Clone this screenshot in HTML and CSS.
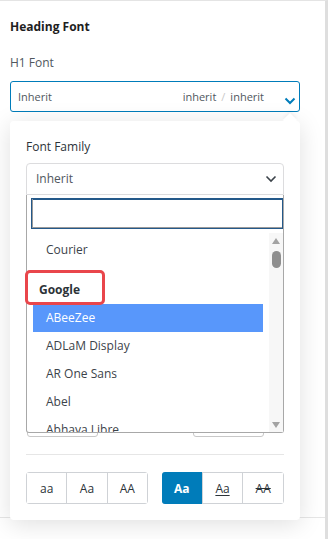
FILE: index.html
```html
<!DOCTYPE html>
<html lang="en">
<head>
<meta charset="utf-8">
<title>Heading Font</title>
<link rel="stylesheet" href="styles.css">
</head>
<body>
<div class="page">
  <section class="section">
    <h3 class="title">Heading Font</h3>
    <div class="label">H1 Font</div>
    <div class="select-main">
      <span class="sm-value">Inherit</span>
      <span class="sm-meta"><span>inherit</span><span class="slash">/</span><span>inherit</span></span>
      <svg class="chev-blue" width="12" height="8" viewBox="0 0 12 8"><polyline points="1.5,1.5 6,6 10.5,1.5" fill="none" stroke="#007cba" stroke-width="2"/></svg>
    </div>

    <div class="popover">
      <div class="pop-arrow"></div>
      <div class="pf-label">Font Family</div>
      <div class="pf-select">
        <span>Inherit</span>
        <svg class="chev-dark" width="12" height="8" viewBox="0 0 12 8"><polyline points="1.5,1.5 6,6 10.5,1.5" fill="none" stroke="#3c434a" stroke-width="1.6"/></svg>
      </div>
      <div class="fields">
        <div class="fbox"></div>
        <div class="fbox fbox-2"></div>
      </div>
      <div class="sep"></div>
      <div class="btn-row">
        <div class="btn-group">
          <button class="btn">aa</button>
          <button class="btn">Aa</button>
          <button class="btn">AA</button>
        </div>
        <div class="btn-group">
          <button class="btn active">Aa</button>
          <button class="btn under">Aa</button>
          <button class="btn strike">AA</button>
        </div>
      </div>

      <div class="dropdown">
        <div class="dd-search"><input class="dd-input" type="text"></div>
        <div class="dd-results">
          <ul class="dd-list">
            <li class="opt">Courier</li>
            <li class="group">Google</li>
            <li class="opt hl">ABeeZee</li>
            <li class="opt">ADLaM Display</li>
            <li class="opt">AR One Sans</li>
            <li class="opt">Abel</li>
            <li class="opt">Abhaya Libre</li>
          </ul>
          <div class="dd-track">
            <span class="arr-up"></span>
            <span class="thumb"></span>
            <span class="arr-down"></span>
          </div>
        </div>
      </div>
      <div class="annot"></div>
    </div>
  </section>
</div>
</body>
</html>
```

FILE: styles.css
```css
* { box-sizing: border-box; }

body {
  margin: 0;
  background: #fff;
  font-family: "Open Sans", "Noto Sans", sans-serif;
  font-size: 12px;
  color: #333;
}

.page {
  width: 328px;
  height: 539px;
  border-top: 1px solid #e4e4e4;
  border-right: 3px solid #dedede;
  overflow: hidden;
}

.section {
  position: relative;
  height: 517px;
  border-bottom: 1px solid #e6e6e6;
  padding: 18px 10px 0 10px;
}

.title {
  margin: 0;
  font-size: 12px;
  font-weight: 700;
  line-height: 16px;
  color: #1e1e1e;
}

.label {
  margin-top: 20px;
  line-height: 16px;
  color: #50575e;
}

.select-main {
  margin-top: 10px;
  height: 31px;
  width: 290px;
  border: 1px solid #007cba;
  border-radius: 3px;
  display: flex;
  align-items: center;
  padding: 0 3px 0 7px;
  font-size: 11px;
  color: #50575e;
  line-height: 16px;
}

.sm-value { flex: 1; }

.sm-meta {
  display: flex;
  gap: 5px;
}

.slash { color: #c9c9c9; }

.chev-blue {
  margin-left: 20px;
  margin-top: 8px;
}

.popover {
  position: absolute;
  top: 120px;
  left: 10px;
  width: 290px;
  height: 399px;
  background: #fff;
  border-radius: 4px;
  box-shadow: 0 4px 24px rgba(0, 0, 0, 0.13);
  padding: 16px;
}

.pop-arrow {
  position: absolute;
  top: -6px;
  left: 275px;
  width: 10px;
  height: 10px;
  background: #fff;
  transform: rotate(45deg);
  box-shadow: -2px -2px 3px rgba(0, 0, 0, 0.04);
}

.pf-label {
  position: relative;
  line-height: 20px;
  color: #2c3338;
}

.pf-select {
  margin-top: 6px;
  height: 32px;
  border: 1px solid #dcdcde;
  border-radius: 4px 4px 0 0;
  display: flex;
  align-items: center;
  justify-content: space-between;
  padding: 0 6px 0 9px;
  line-height: 16px;
  color: #50575e;
}

.fields {
  margin-top: 212px;
  display: flex;
  height: 30px;
}

.fbox {
  width: 71px;
  margin-left: 1px;
  border: 1px solid #c8c8c8;
  border-radius: 3px;
}

.fbox-2 {
  margin-left: auto;
  margin-right: 20px;
}

.sep {
  margin-top: 17px;
  height: 1px;
  background: #e6e6e6;
}

.btn-row {
  margin-top: 17px;
  display: flex;
  justify-content: space-between;
}

.btn-group {
  display: flex;
  width: 122px;
  height: 32px;
  border: 1px solid #cfd2d6;
  border-radius: 3px;
}

.btn {
  flex: 1;
  border: 0;
  border-left: 1px solid #cfd2d6;
  background: #fff;
  font-family: "Open Sans", "Noto Sans", sans-serif;
  font-size: 12px;
  color: #2c3338;
  padding: 0;
}

.btn:first-child { border-left: 0; }

.btn.active {
  margin: -1px 0 -1px -1px;
  border-radius: 3px 0 0 3px;
  background: #007cba;
  color: #fff;
  font-weight: 700;
}

.btn.under {
  text-decoration: underline;
  text-underline-offset: 2px;
}

.btn.strike { text-decoration: line-through; }

.dropdown {
  position: absolute;
  top: 74px;
  left: 16px;
  width: 258px;
  height: 238px;
  background: #fff;
  border: 1px solid #a8a8a8;
  border-top: 0;
  border-radius: 0 0 3px 3px;
  display: flex;
  flex-direction: column;
}

.dd-search {
  padding: 3px 0 4px 4px;
}

.dd-input {
  display: block;
  width: 252px;
  height: 31px;
  margin: 0;
  border: 1px solid #24598a;
  box-shadow: inset 1px -1px 0 #9a9a9a, inset 0 1px 0 #24598a;
  background: #fff;
  outline: none;
}

.dd-results {
  flex: 1;
  display: flex;
  min-height: 0;
}

.dd-list {
  flex: 1;
  margin: 0;
  padding: 3px 0 0 0;
  list-style: none;
  overflow: hidden;
}

.opt {
  margin: 0 6px;
  padding: 6px 13px;
  line-height: 16px;
  color: #3c434a;
  white-space: nowrap;
}

.opt.hl {
  background: #5897fb;
  color: #fff;
}

.group {
  margin: 12px 6px 0;
  padding: 6px 6px;
  line-height: 16px;
  font-weight: 700;
  color: #2c3338;
}

.dd-track {
  width: 14px;
  background: #f7f7f7;
  display: flex;
  flex-direction: column;
  align-items: center;
  padding: 5px 0 4px;
}

.arr-up {
  width: 0;
  height: 0;
  border-left: 4.5px solid transparent;
  border-right: 4.5px solid transparent;
  border-bottom: 6px solid #a3a3a3;
}

.thumb {
  margin-top: 7px;
  width: 9px;
  height: 17px;
  border-radius: 5px;
  background: #8f8f8f;
}

.arr-down {
  margin-top: auto;
  width: 0;
  height: 0;
  border-left: 4.5px solid transparent;
  border-right: 4.5px solid transparent;
  border-top: 6px solid #a3a3a3;
}

.annot {
  position: absolute;
  top: 149px;
  left: 15px;
  width: 80px;
  height: 35px;
  border: 3px solid #e9464b;
  border-radius: 5px;
}
```
